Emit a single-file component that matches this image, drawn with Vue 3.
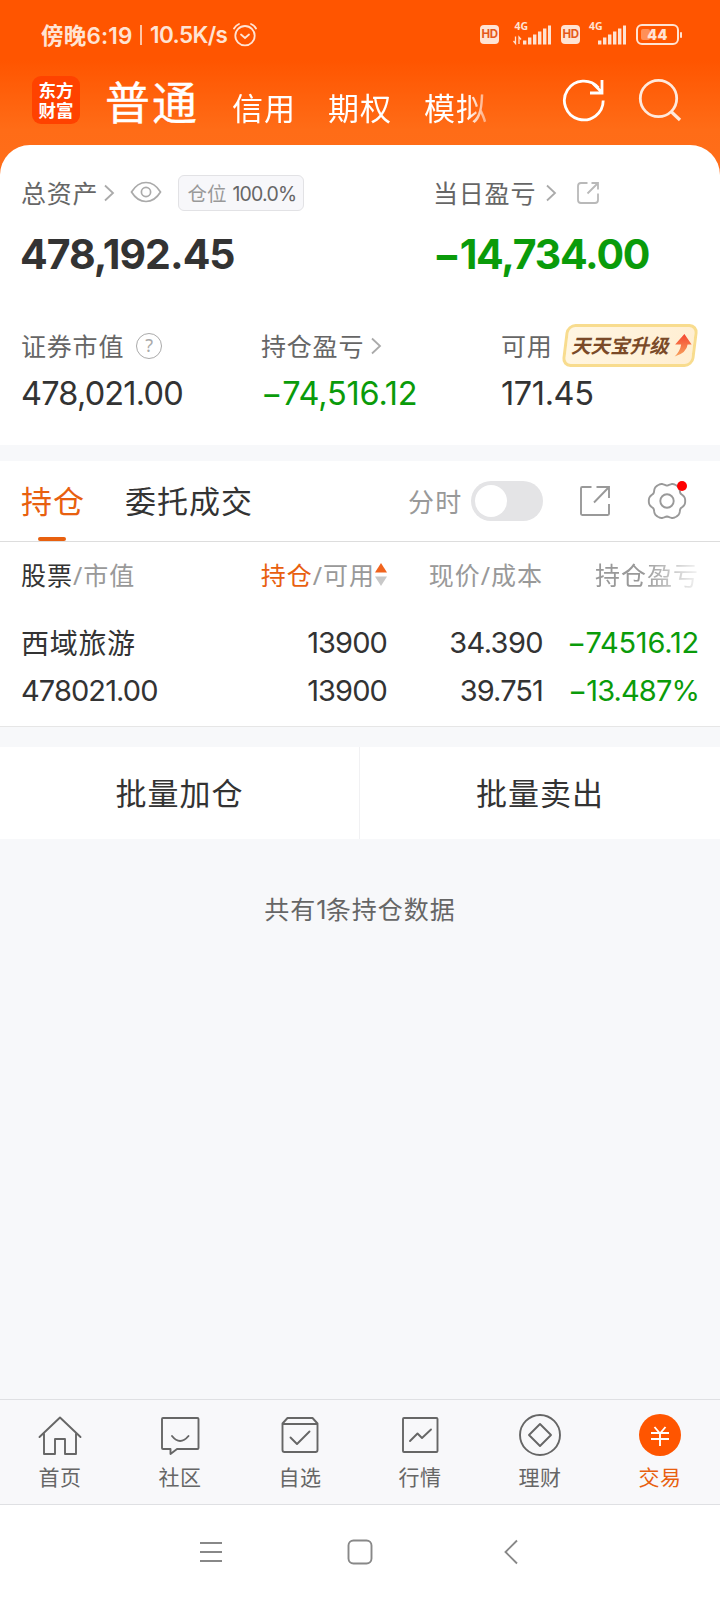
<script setup>
const accounts = ['信用', '期权', '模拟']

// Six-lobed outline of the settings gear, in polar form around (20, 20)
const gear = Array.from({ length: 72 }, (_, i) => {
  const a = (i * Math.PI) / 36
  const r = 18.2 - 2.7 * ((1 - Math.cos(6 * a)) / 2) ** 2
  return `${(20 + r * Math.cos(a)).toFixed(2)},${(20 + r * Math.sin(a)).toFixed(2)}`
}).join(' ')

const bars = [4, 7, 10, 13, 16, 19]
const nav = [
  { key: 'home', label: '首页' },
  { key: 'chat', label: '社区' },
  { key: 'pick', label: '自选' },
  { key: 'chart', label: '行情' },
  { key: 'wealth', label: '理财' },
  { key: 'trade', label: '交易' },
]
</script>

<template>
  <div class="page">
    <header class="top">
      <div class="status">
        <span class="st-time">傍晚6:19</span>
        <i class="st-sep"></i>
        <span class="st-speed">10.5K/s</span>
        <svg class="alarm" width="24" height="24" viewBox="0 0 24 24" fill="none" stroke="#ffe3d3" stroke-width="1.8">
          <circle cx="12" cy="12.7" r="9.7" />
          <path d="M8 11.5l4 3.5 4-3.5M1 5.5Q2.500 2.500 6 1M23 5.500Q21.500 2.500 18 1" stroke-linecap="round" />
        </svg>
        <div class="st-right">
          <span class="hd">HD</span>
          <svg class="sig sig1" width="38" height="30" viewBox="0 -6 38 30" fill="#ffe3d3">
            <text x="1.500" y="7.600" class="g4">4G</text>
            <path d="M2.500 14.500v7l-2-2.500M6 22v-7l2 2.500" fill="none" stroke="#ffe3d3" stroke-width="1.300" />
            <rect v-for="(h, i) in bars" :key="i" :x="10 + i * 5" :y="22.500 - h" width="3.400" :height="h" />
          </svg>
          <span class="hd">HD</span>
          <svg class="sig sig2" width="38" height="30" viewBox="0 -6 38 30" fill="#ffe3d3">
            <text x="1" y="7.600" class="g4">4G</text>
            <rect v-for="(h, i) in bars" :key="i" :x="10 + i * 5" :y="22.500 - h" width="3.400" :height="h" />
          </svg>
          <span class="battery"><i class="level"></i><b>44</b></span><i class="cap"></i>
        </div>
      </div>
      <div class="bar">
        <div class="logo"><span>东方</span><span>财富</span></div>
        <h1>普通</h1>
        <div class="accounts">
          <span v-for="a in accounts" :key="a">{{ a }}</span>
        </div>
        <svg class="refresh" width="44" height="44" viewBox="0 0 44 44" fill="none" stroke="#fff" stroke-width="2.800">
          <path d="M41.200 22.500A19.400 19.400 0 1 1 36.500 9.800" />
          <path d="M40 2v13H28M31 5.500L39.500 14" />
        </svg>
        <svg class="search" width="44" height="44" viewBox="0 0 44 44" fill="none" stroke="#ffe9dc" stroke-width="2.800">
          <circle cx="20.500" cy="20.500" r="18.200" />
          <path d="M33 33.500l9 8.500" stroke-width="3.200" />
        </svg>
      </div>
    </header>

    <section class="summary">
      <div class="row labels1">
        <div class="half">
          <span class="lab">总资产</span>
          <svg class="chev" width="12" height="18" viewBox="0 0 12 18"><path d="M2 1.500l8 7.500-8 7.500" /></svg>
          <svg class="eye" width="32" height="22" viewBox="0 0 32 22" fill="none" stroke="#aaa" stroke-width="1.700">
            <path d="M1.500 11C5.500 4.500 10 1.500 16 1.500S26.500 4.500 30.500 11C26.500 17.500 22 20.500 16 20.500S5.500 17.500 1.500 11Z" />
            <circle cx="16" cy="11" r="4.600" />
          </svg>
          <span class="chip">仓位 <em>100.0%</em></span>
        </div>
        <div class="half">
          <span class="lab day">当日盈亏</span>
          <svg class="chev day-chev" width="12" height="18" viewBox="0 0 12 18"><path d="M2 1.500l8 7.500-8 7.500" /></svg>
          <svg class="share" width="24" height="24" viewBox="0 0 24 24" fill="none" stroke="#b9b9b9" stroke-width="1.800">
            <path d="M11.500 2H5Q2 2 2 5V19Q2 22 5 22H19Q22 22 22 19V12.500M15.500 2H22V8.500M22 2L11.500 12.500" />
          </svg>
        </div>
      </div>
      <div class="row big num">
        <b class="half">478,192.45</b>
        <b class="half green loss"><span class="minus">−</span>14,734.00</b>
      </div>
      <div class="row thirds labels2">
        <div><span class="lab">证券市值</span><span class="help">?</span></div>
        <div>
          <span class="lab">持仓盈亏</span>
          <svg class="chev near" width="12" height="18" viewBox="0 0 12 18"><path d="M2 1.500l8 7.500-8 7.500" /></svg>
        </div>
        <div>
          <span class="lab">可用</span>
          <span class="promo"><b>天天宝升级</b>
            <svg width="18" height="23" viewBox="0 0 18 23">
              <defs><linearGradient id="arrow" x1="0" y1="0" x2="0" y2="1"><stop offset="0" stop-color="#f5452f" /><stop offset="1" stop-color="#f7a35e" /></linearGradient></defs>
              <path d="M9 0L17.500 10.500H13.500Q13.500 19 2 22.500Q7 17 7 10.500H1Z" fill="url(#arrow)" />
            </svg>
          </span>
        </div>
      </div>
      <div class="row thirds mid num">
        <span>478,021.00</span>
        <span class="green profit"><span class="minus">−</span>74,516.12</span>
        <span class="avail">171.45</span>
      </div>
    </section>

    <section class="tabs">
      <div class="tab on">持仓</div>
      <div class="tab">委托成交</div>
      <span class="minute">分时</span>
      <span class="switch"><i></i></span>
      <svg class="export" width="32" height="32" viewBox="0 0 32 32" fill="none" stroke="#999" stroke-width="1.900">
        <path d="M12.500 2H3.200Q2 2 2 3.200V28.800Q2 30 3.200 30H28.800Q30 30 30 28.800V19M17.500 2H30V13M30 2L15 17.500" />
      </svg>
      <span class="gear">
        <svg width="40" height="40" viewBox="0 0 40 40" fill="none" stroke="#999" stroke-width="1.900">
          <polygon :points="gear" stroke-linejoin="round" />
          <circle cx="20" cy="20" r="6.700" />
        </svg>
        <i class="dot"></i>
      </span>
    </section>

    <section class="table">
      <div class="tr th">
        <span><em class="dark">股票</em>/市值</span>
        <span class="sorted"><em class="orange">持仓</em>/可用<svg width="12" height="23" viewBox="0 0 12 23"><path d="M6 0l6 9.500H0z" fill="#f0641e" /><path d="M6 23l6-9.500H0z" fill="#c8c8c8" /></svg></span>
        <span>现价/成本</span>
        <span class="faded">持仓盈亏</span>
      </div>
      <div class="tr td num first">
        <span class="stock">西域旅游</span><span>13900</span><span class="price">34.390</span><span class="green amount"><span class="minus">−</span>74516.12</span>
      </div>
      <div class="tr td num">
        <span>478021.00</span><span>13900</span><span>39.751</span><span class="green"><span class="minus">−</span>13.487%</span>
      </div>
    </section>

    <section class="actions"><div>批量加仓</div><div>批量卖出</div></section>
    <p class="count">共有<span class="one">1</span>条持仓数据</p>

    <nav class="nav">
      <div v-for="n in nav" :key="n.key" class="item" :class="{ active: n.key === 'trade' }">
        <svg width="44" height="44" viewBox="0 0 44 44" fill="none" stroke="#666" stroke-width="1.900" stroke-linejoin="round" stroke-linecap="round">
          <template v-if="n.key === 'home'"><path d="M1.500 24L22 4.500 42.500 24M6 20.500V41H17V26H27V41H38V20.500" /></template>
          <template v-else-if="n.key === 'chat'"><path d="M5 5H39.500Q40.500 5 40.500 6V35Q40.500 36 39.500 36H19L12.500 41V36H5Q4 36 4 35V6Q4 5 5 5ZM14 23Q22 33 30.500 23" /></template>
          <template v-else-if="n.key === 'pick'"><path d="M9.500 5H34.500L39.500 10.500V37Q39.500 39 37.500 39H6.500Q4.500 39 4.500 37V10.500ZM4.500 11H39.500M12.500 24.500L19 31 31.500 18.500" /></template>
          <template v-else-if="n.key === 'chart'"><rect x="5" y="5" width="34.500" height="34" rx="1" /><path d="M12 28L19.500 20.500 24 25 33 16.500" /></template>
          <template v-else-if="n.key === 'wealth'"><circle cx="22" cy="22" r="20" /><path d="M22 11L33 22 22 33 11 22Z" /></template>
          <template v-else><circle cx="22" cy="22" r="21" fill="#ff5500" stroke="none" /><path d="M16.500 14L22 20.500 27.500 14M22 20.500V33M13 20H31M13 26H31" stroke="#fff" stroke-linecap="butt" /></template>
        </svg>
        <span>{{ n.label }}</span>
      </div>
    </nav>
    <footer class="sys">
      <svg width="24" height="24" viewBox="0 0 24 24"><path d="M1 3H23M1 12H23M1 21H23" /></svg>
      <svg width="26" height="26" viewBox="0 0 26 26"><rect x="1.500" y="1.500" width="23" height="23" rx="5" /></svg>
      <svg width="14" height="26" viewBox="0 0 14 26"><path d="M13 1.500L1.500 13 13 24.500" /></svg>
    </footer>
  </div>
</template>

<style>
body { margin: 0; background: #f7f8fa; }
</style>

<style scoped>
* { box-sizing: border-box; }
em, i { font-style: normal; }
svg { display: block; flex: none; }
.page { width: 720px; height: 1600px; display: flex; flex-direction: column; background: #f7f8fa; font-family: "Noto Sans", "Noto Sans CJK SC", sans-serif; color: #333; overflow: hidden; white-space: nowrap; }
.num { font-family: Inter, "Noto Sans CJK SC", sans-serif; }
.green { color: #0a9b0a; }
.orange { color: #e8600f; }
.dark { color: #333; }

.top { height: 180px; flex: none; background: linear-gradient(#ff5500 0, #ff5500 60px, #ff6c17 130px, #ff6e1a 180px); }
.status { height: 69px; display: flex; align-items: center; padding-left: 41px; color: #ffe3d3; font: 600 22.500px Inter, "Noto Sans CJK SC", sans-serif; }
.st-time { width: 93px; letter-spacing: 0.2px; margin-top: -2px; }
.st-sep { width: 2px; height: 20px; margin-left: 6px; background: #ffc6a6; }
.st-speed { margin-left: 8px; width: 80px; letter-spacing: -0.600px; margin-top: -1px; }
.alarm { margin-left: 3px; }
.st-right { display: flex; align-items: center; margin-left: auto; padding-right: 38px; }
.hd { width: 19px; height: 19px; border-radius: 4px; background: #ffe3d3; color: #e5591a; font-size: 11.500px; line-height: 19px; font-weight: 700; text-align: center; letter-spacing: -0.5px; }
.sig1 { margin: -8px 10px 0 14px; }
.sig2 { margin: -8px 10px 0 8px; }
.g4 { font: 700 10.500px "Noto Sans", sans-serif; }
.battery { width: 43px; height: 21px; border: 2px solid #ffe3d3; border-radius: 6px; display: flex; align-items: center; position: relative; }
.level { width: 9px; height: 11px; margin-left: 3px; border-radius: 2px; background: #ff9058; }
.battery b { position: absolute; left: 0; right: 0; text-align: center; font-size: 14px; line-height: 17px; letter-spacing: 0.5px; }
.cap { width: 2px; height: 6px; margin-left: 1px; background: #ffe3d3; border-radius: 1px; }
.bar { height: 76px; display: flex; align-items: flex-start; padding-left: 32px; color: #fff; }
.logo { margin-top: 7px; width: 48px; height: 48px; border-radius: 9px; background: #ff4200; display: flex; flex-direction: column; align-items: center; justify-content: center; font: 700 17.500px/20px "Noto Sans CJK SC", sans-serif; }
h1 { margin: 0 0 0 25px; width: 92px; font: 400 45px/64px "Noto Sans CJK SC", sans-serif; letter-spacing: 2px; -webkit-text-stroke: 0.3px #fff; }
.accounts { margin-left: 35px; width: 262px; display: flex; gap: 32px; font: 400 31px/75px "Noto Sans CJK SC", sans-serif; letter-spacing: 1px; -webkit-mask-image: linear-gradient(90deg, #000 235px, transparent 270px); mask-image: linear-gradient(90deg, #000 235px, transparent 270px); }
.refresh { margin: 9px 0 0 68px; }
.search { margin: 9px 0 0 32px; }

.summary { height: 300px; margin-top: -35px; flex: none; background: #fff; border-radius: 30px 30px 0 0; padding: 23px 0 0 21px; }
.row { display: flex; }
.half { width: 412px; flex: none; display: flex; align-items: center; }
.labels1 { height: 50px; }
.lab { position: relative; top: -1px; font-size: 25px; letter-spacing: 0.8px; color: #666; }
.chev { fill: none; stroke: #aaa; stroke-width: 1.800; margin-left: 5px; }
.day-chev { margin-left: 9px; }
.near { margin-left: 6px; }
.eye { margin-left: 15px; margin-top: -2px; }
.share { margin-left: 19px; margin-top: -1px; }
.chip { margin-left: 16px; width: 126px; height: 36px; border: 1px solid #e2e2e5; border-radius: 6px; background: #f7f7fa; color: #999; font-size: 19.500px; line-height: 35px; padding-left: 8px; }
.chip em { color: #666; letter-spacing: -0.800px; font-family: Inter, sans-serif; margin-left: 1px; }
.big { height: 71px; font-size: 41px; padding-top: 1px; }
.big .half { letter-spacing: -1px; font-weight: 700; }
.big .half:first-child { text-indent: -1px; }
.big .loss { letter-spacing: -1.200px; }
.thirds > * { width: 240px; flex: none; display: flex; align-items: center; }
.labels2 { height: 46px; margin-top: 34px; align-items: center; }
.help { margin-left: 12px; width: 26px; height: 26px; border: 1.800px solid #aaa; border-radius: 50%; text-align: center; font-size: 18px; line-height: 23px; color: #aaa; }
.promo { margin-left: 11px; margin-top: -2px; width: 132px; height: 43px; border: 3px solid #f8dc8e; border-radius: 9px; background: linear-gradient(100deg, #fff6e2, #ffeed2); transform: skewX(-7deg); display: flex; align-items: center; padding-left: 6px; }
.promo b { font: 700 19.500px/34px "Noto Sans CJK SC", sans-serif; margin-top: -2px; letter-spacing: 0; color: #7a4a28; transform: skewX(-7deg); }
.promo svg { margin-left: 3px; }
.mid { height: 48px; font-size: 32.500px; letter-spacing: -0.800px; padding-top: 1px; }
.profit { letter-spacing: -0.200px; }
.avail { letter-spacing: -0.400px; }

.tabs { height: 81px; margin-top: 16px; flex: none; background: #fff; border-bottom: 1px solid #ddd; display: flex; align-items: center; padding-left: 21px; }
.tab { position: relative; font-size: 31px; letter-spacing: 1px; height: 80px; line-height: 81px; margin-right: 40px; }
.on { color: #e8600f; }
.on::after { content: ""; position: absolute; left: 17px; bottom: 0; width: 28px; height: 4px; border-radius: 2px; background: #e8600f; }
.minute { margin-left: 115px; font-size: 26px; letter-spacing: 1.200px; color: #999; }
.switch { margin-left: 9px; width: 72px; height: 40px; border-radius: 20px; background: #e4e4e6; padding: 4px; }
.switch i { display: block; width: 32px; height: 32px; border-radius: 50%; background: #fff; }
.export { margin-left: 36px; }
.gear { margin-left: 36px; position: relative; }
.dot { position: absolute; width: 10px; height: 10px; border-radius: 50%; right: 0; top: 0; background: #f00; }

.table { height: 185px; flex: none; background: #fff; border-bottom: 1px solid #e6e6e6; }
.tr { display: grid; grid-template-columns: 188px 178px 156px 156px; padding-left: 21px; align-items: center; }
.tr > span { text-align: right; }
.tr > span:first-child { text-align: left; }
.th { height: 64px; font-size: 25px; letter-spacing: 1px; color: #999; }
.th .sorted { display: flex; justify-content: flex-end; align-items: center; }
.th .faded { -webkit-mask-image: linear-gradient(90deg, #000 100px, rgba(0,0,0,.1) 156px); mask-image: linear-gradient(90deg, #000 100px, rgba(0,0,0,.1) 156px); }
.td { height: 48px; font-size: 29px; letter-spacing: -0.900px; }
.first { margin-top: 12px; }
.tr .stock { font-size: 28px; letter-spacing: 0.7px; }
.tr .price { letter-spacing: -0.600px; }
.tr .amount { letter-spacing: -0.200px; }

.actions { height: 92px; margin-top: 20px; flex: none; background: #fff; display: flex; }
.actions div { width: 359px; text-align: center; font-size: 31px; letter-spacing: 1px; line-height: 93px; }
.actions div + div { width: 361px; border-left: 1px solid #f1f1f3; }
.count { margin: 45px 0 0; text-align: center; font-size: 25px; line-height: 50px; letter-spacing: 1px; color: #666; }
.one { font-family: Inter, sans-serif; letter-spacing: -0.5px; }

.nav { margin-top: auto; height: 106px; flex: none; display: flex; border-top: 1px solid #dfe0e3; border-bottom: 1px solid #dfe0e3; background: #f8f8fa; }
.item { flex: 1; display: flex; flex-direction: column; align-items: center; padding-top: 13px; font-size: 21px; letter-spacing: 0.6px; line-height: 40px; color: #666; }
.active { color: #e8600f; }
.sys { height: 95px; flex: none; background: #fff; display: grid; grid-template-columns: 24px 26px 14px; column-gap: 124px; padding: 0 0 2px 199px; align-items: center; }
.sys svg { fill: none; stroke: #888; stroke-width: 1.900; }
.sys svg:nth-child(3) { margin-left: 7px; }
</style>
